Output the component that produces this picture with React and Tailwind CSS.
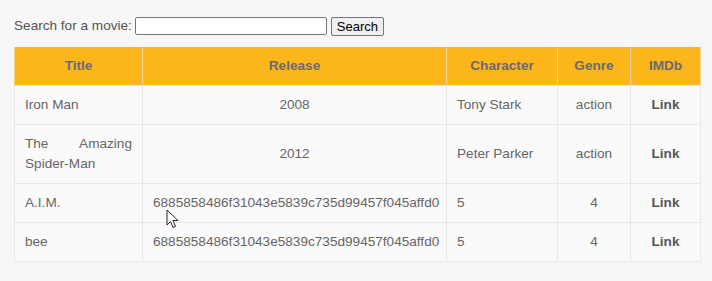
import React from 'react';

const movies = [
  { title: 'Iron Man', release: '2008', character: 'Tony Stark', genre: 'action' },
  { title: 'The Amazing Spider-Man', release: '2012', character: 'Peter Parker', genre: 'action' },
  { title: 'A.I.M.', release: '6885858486f31043e5839c735d99457f045affd0', character: '5', genre: '4' },
  { title: 'bee', release: '6885858486f31043e5839c735d99457f045affd0', character: '5', genre: '4' },
];

const Cursor = () => (
  <svg className="absolute left-[166px] top-[209px]" width="13" height="20" viewBox="0 0 13 20">
    <path d="M1 1 L1 16 L4.5 12.5 L7 18.5 L9.5 17.5 L7 11.5 L12 11.5 Z" fill="#fff" stroke="#222" strokeWidth="1" strokeLinejoin="round" />
  </svg>
);

export default function App() {
  const cell = 'border border-[#e8e8e8] px-[10px] py-[9px] leading-[20px]';
  const head = 'border-x border-[#f7d48e] px-[10px] py-[9px] leading-[20px] font-bold text-center';

  return (
    <div className="relative min-h-[281px] bg-[#f7f7f7] px-[14px] pt-[16px] text-[13.6px] text-[#666] font-['Liberation_Sans',Arial,sans-serif]">
      <div className="flex items-center h-[20px]">
        <label className="mr-[3px] text-[#555]">Search for a movie:</label>
        <input type="text" className="w-[192px] h-[18px] bg-white border border-[#767676] rounded-[2px]" />
        <button className="ml-[4px] h-[19px] w-[53px] bg-[#efefef] border border-[#767676] rounded-[2px] text-[13px] leading-[15px] text-black">
          Search
        </button>
      </div>
      <table className="mt-[11px] w-[686px] table-fixed border-collapse bg-[#fafafa]">
        <colgroup>
          <col className="w-[128px]" />
          <col className="w-[304px]" />
          <col className="w-[111px]" />
          <col className="w-[73px]" />
          <col className="w-[70px]" />
        </colgroup>
        <thead>
          <tr className="bg-[#fdb51c] text-[#6b6b6b]">
            <th className={head}>Title</th>
            <th className={head}>Release</th>
            <th className={head}>Character</th>
            <th className={head}>Genre</th>
            <th className={head}>IMDb</th>
          </tr>
        </thead>
        <tbody>
          {movies.map((m, i) => (
            <tr key={i}>
              <td className={`${cell} text-justify`}>{m.title}</td>
              <td className={`${cell} text-center`}>{m.release}</td>
              <td className={cell}>{m.character}</td>
              <td className={`${cell} text-center`}>{m.genre}</td>
              <td className={`${cell} text-center font-bold text-[#555]`}>Link</td>
            </tr>
          ))}
        </tbody>
      </table>
      <Cursor />
    </div>
  );
}
